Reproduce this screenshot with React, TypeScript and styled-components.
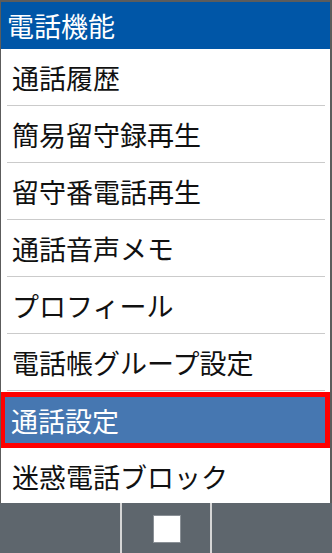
import React from 'react';
import styled, {createGlobalStyle} from 'styled-components';

const GlobalStyle = createGlobalStyle`
  html, body {
    margin: 0;
    padding: 0;
    background: #ffffff;
  }
  body {
    font-family: "Noto Sans CJK JP", "Noto Sans", sans-serif;
  }
`

const Screen = styled.div`
  width: 332px;
  height: 553px;
  box-sizing: border-box;
  display: flex;
  flex-direction: column;
  background: #ffffff;
  border-top: 2px solid #5c5c5c;
  overflow: hidden;
`

const Framed = styled.div`
  flex: 1;
  display: flex;
  flex-direction: column;
  min-height: 0;
  border-left: 1px solid #5c5c5c;
  border-right: 2px solid #5c5c5c;
`

const Header = styled.div`
  height: 47px;
  flex-shrink: 0;
  display: flex;
  align-items: center;
  padding-left: 6px;
  background: #0056a7;
  color: #ffffff;
  font-size: 27px;
  line-height: 1;
`

const List = styled.ul`
  flex: 1;
  min-height: 0;
  margin: 0;
  padding: 0;
  list-style: none;
  overflow: hidden;
`

const Row = styled.li`
  position: relative;
  height: 57px;
  box-sizing: border-box;
  display: flex;
  align-items: center;
  padding-left: 11px;
  padding-bottom: 1px;
  font-size: 27px;
  line-height: 1;
  color: #111111;

  &::after {
    content: "";
    position: absolute;
    left: 6px;
    right: 5px;
    bottom: 0;
    height: 1px;
    background: #cbcbcb;
  }
`

const Highlight = styled.div`
  position: relative;
  z-index: 1;
  align-self: stretch;
  flex: 1;
  display: flex;
  align-items: center;
  margin: 1px 0 0 -12px;
  padding-left: 6px;
  height: 56px;
  box-sizing: border-box;
  border: 5px solid #ff0000;
  background: #4677b1;
  color: #ffffff;
`

const BottomBar = styled.div`
  height: 50px;
  flex-shrink: 0;
  display: grid;
  grid-template-columns: 120px 2px 88px 2px 1fr;
  background: #5e666d;
`

const Divider = styled.div`
  background: #d6d6d6;
`

const Slot = styled.div`
  display: flex;
  align-items: center;
  justify-content: center;
`

const HomeKey = styled.div`
  width: 26px;
  height: 26px;
  margin-left: 2px;
  margin-top: 1px;
  background: #ffffff;
  border: 1px solid #8a9096;
`

const items = [
    '通話履歴',
    '簡易留守録再生',
    '留守番電話再生',
    '通話音声メモ',
    'プロフィール',
    '電話帳グループ設定',
    '通話設定',
    '迷惑電話ブロック',
]

const selected = '通話設定'

export default function App() {
    return (
        <>
            <GlobalStyle/>
            <Screen>
                <Framed>
                    <Header>電話機能</Header>
                    <List>
                        {items.map(label => (
                            <Row key={label}>
                                {label === selected
                                    ? <Highlight>{label}</Highlight>
                                    : label}
                            </Row>
                        ))}
                    </List>
                </Framed>
                <BottomBar>
                    <Slot/>
                    <Divider/>
                    <Slot><HomeKey/></Slot>
                    <Divider/>
                    <Slot/>
                </BottomBar>
            </Screen>
        </>
    );
}
